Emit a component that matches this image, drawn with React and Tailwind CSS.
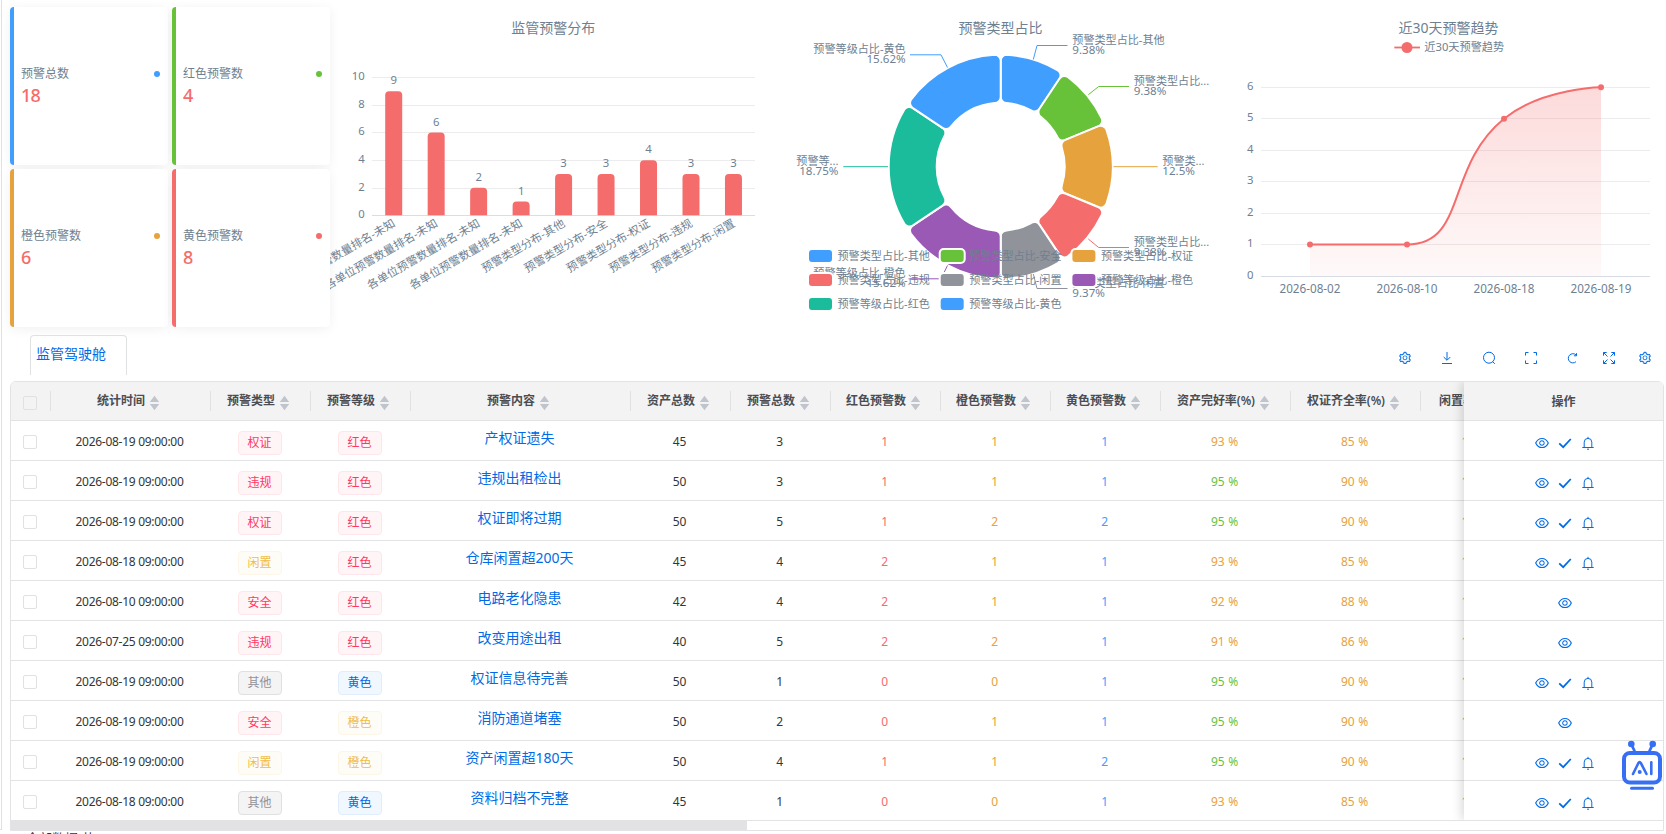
import React from 'react';
import { AiOutlineSetting, AiOutlineEye } from 'react-icons/ai';

const FONT = "font-['Noto_Sans','Noto_Sans_CJK_SC',sans-serif]";
const INK = '#6e7f92';

/* ---------- stat cards ---------- */
const CARDS = [
  { label: '预警总数', value: 18, border: 'border-[#409eff]', dot: 'bg-[#409eff]' },
  { label: '红色预警数', value: 4, border: 'border-[#67c23a]', dot: 'bg-[#67c23a]' },
  { label: '橙色预警数', value: 6, border: 'border-[#e6a23c]', dot: 'bg-[#e6a23c]' },
  { label: '黄色预警数', value: 8, border: 'border-[#f56c6c]', dot: 'bg-[#f56c6c]' },
];

function StatCard({ card }) {
  return (
    <div className={`flex h-[158px] w-[158px] flex-col justify-center rounded border-l-4 bg-white pr-2 pl-[7px] shadow-[0_2px_12px_rgba(0,0,0,0.06)] ${card.border}`}>
      <div className="flex items-center justify-between text-[12px] leading-[18px] text-[#6e7f92]">
        <span>{card.label}</span>
        <span className={`h-1.5 w-1.5 rounded-full ${card.dot}`} />
      </div>
      <div className="text-[18px] leading-[25px] font-medium tracking-[-0.7px] text-[#f56c6c]">{card.value}</div>
    </div>
  );
}

function T({ x, y, size = 11, anchor = 'start', children, ...rest }) {
  return (
    <text x={x} y={y} fontSize={size} textAnchor={anchor} fill={INK} dominantBaseline="central" {...rest}>
      {children}
    </text>
  );
}

/* ---------- bar chart ---------- */
const BARS = [
  ['各单位预警数量排名-未知', 9],
  ['各单位预警数量排名-未知', 6],
  ['各单位预警数量排名-未知', 2],
  ['各单位预警数量排名-未知', 1],
  ['预警类型分布-其他', 3],
  ['预警类型分布-安全', 3],
  ['预警类型分布-权证', 4],
  ['预警类型分布-违规', 3],
  ['预警类型分布-闲置', 3],
];

function BarChart() {
  return (
    <svg width="447" height="331" viewBox="330 0 447 331" className="shrink-0 overflow-hidden">
      <T x="553.3" y="27" size={14} anchor="middle">监管预警分布</T>
      {[0, 2, 4, 6, 8, 10].map((v) => {
        const y = Math.round(215.1 - v * 13.78) + 0.5;
        return (
          <g key={v}>
            <line x1="372" x2="755" y1={y} y2={y} stroke={v ? '#ececef' : '#dcdde2'} />
            <T x="364.8" y={y - 2} anchor="end" size={11.3}>{v}</T>
          </g>
        );
      })}
      {BARS.map(([name, v], i) => {
        const cx = 393.7 + i * 42.47;
        const top = 215.3 - v * 13.78;
        return (
          <g key={i}>
            <path
              d={`M${cx - 8.5} 215.3V${top + 4}a4 4 0 0 1 4 -4h9a4 4 0 0 1 4 4V215.3Z`}
              fill="#f56c6c"
            />
            <T x={cx} y={top - 11.5} anchor="middle" size={11.3}>{v}</T>
            <T x="0" y="0" size={11.3} anchor="end" transform={`translate(${cx} 221.8) rotate(-30)`}>{name}</T>
          </g>
        );
      })}
    </svg>
  );
}

/* ---------- pie chart ---------- */
const CX = 1000.7;
const CY = 166.7;
const SLICES = [
  [3, '#409eff'], [3, '#67c23a'], [4, '#e6a23c'], [3, '#f56c6c'],
  [3, '#909399'], [5, '#9b59b6'], [6, '#1abc9c'], [5, '#409eff'],
];
const at = (r, a) => `${(CX + r * Math.sin(a)).toFixed(2)} ${(CY - r * Math.cos(a)).toFixed(2)}`;

function slicePath(a0, a1) {
  const R = 112;
  const r = 64;
  const c = 6;
  return [
    `M${at(r + c, a0)}`,
    `L${at(R - c, a0)}`,
    `A${c} ${c} 0 0 1 ${at(R, a0 + c / R)}`,
    `A${R} ${R} 0 0 1 ${at(R, a1 - c / R)}`,
    `A${c} ${c} 0 0 1 ${at(R - c, a1)}`,
    `L${at(r + c, a1)}`,
    `A${c} ${c} 0 0 1 ${at(r, a1 - c / r)}`,
    `A${r} ${r} 0 0 0 ${at(r, a0 + c / r)}`,
    `A${c} ${c} 0 0 1 ${at(r + c, a0)}Z`,
  ].join('');
}

const CALLOUTS = [
  { pts: '1033.3,59.5 1037,45.5 1067.5,45.5', c: '#409eff', x: 1072.3, y: 39, a: 'start', t: '预警类型占比-其他', p: '9.38%' },
  { pts: '1088.3,94.7 1098.7,86.5 1129,86.5', c: '#67c23a', x: 1133.7, y: 80, a: 'start', t: '预警类型占比...', p: '9.38%' },
  { pts: '1113.5,166.7 1157.7,166.7', c: '#e6a23c', x: 1162.3, y: 160, a: 'start', t: '预警类...', p: '12.5%' },
  { pts: '1088.3,239 1098.7,247.5 1129,247.5', c: '#f56c6c', x: 1133.7, y: 241, a: 'start', t: '预警类型占比...', p: '9.38%' },
  { pts: '1033.3,274 1037,288.5 1067.5,288.5', c: '#909399', x: 1072.3, y: 282.3, a: 'start', t: '预警类型占比-闲置', p: '9.37%' },
  { pts: '947.5,265.5 941,278.8 910,278.8', c: '#9b59b6', x: 905.7, y: 272, a: 'end', t: '预警等级占比-橙色', p: '15.62%' },
  { pts: '888,166.7 843.3,166.7', c: '#1abc9c', x: 838.5, y: 160, a: 'end', t: '预警等...', p: '18.75%' },
  { pts: '947.5,67.5 941,54.8 910,54.8', c: '#409eff', x: 905.7, y: 48, a: 'end', t: '预警等级占比-黄色', p: '15.62%' },
];

const PIE_LEGEND = [
  ['预警类型占比-其他', '#409eff'], ['预警类型占比-安全', '#67c23a'], ['预警类型占比-权证', '#e6a23c'],
  ['预警类型占比-违规', '#f56c6c'], ['预警类型占比-闲置', '#909399'], ['预警等级占比-橙色', '#9b59b6'],
  ['预警等级占比-红色', '#1abc9c'], ['预警等级占比-黄色', '#409eff'],
];

function PieChart() {
  let acc = 0;
  return (
    <svg width="447" height="331" viewBox="777 0 447 331" className="shrink-0 overflow-hidden">
      <T x={CX - 0.3} y="27" size={14} anchor="middle">预警类型占比</T>
      {SLICES.map(([n, color], i) => {
        const a0 = (acc / 32) * Math.PI * 2;
        acc += n;
        const a1 = (acc / 32) * Math.PI * 2;
        return <path key={i} d={slicePath(a0, a1)} fill={color} stroke="#fff" strokeWidth="2" />;
      })}
      {CALLOUTS.map((c, i) => (
        <g key={i}>
          <polyline points={c.pts} fill="none" stroke={c.c} strokeWidth="1" />
          <T x={c.x} y={c.y} anchor={c.a} size={11.1}>{c.t}</T>
          <T x={c.x} y={c.y + 10.6} anchor={c.a} size={11.6}>{c.p}</T>
        </g>
      ))}
      {PIE_LEGEND.map(([name, color], i) => {
        const x = 808 + (i % 3) * 131.7;
        const y = 249 + Math.floor(i / 3) * 24;
        return (
          <g key={i}>
            <rect x={x} y={y} width="25" height="14" rx="4" fill={color} stroke="#fff" strokeWidth="2" />
            <T x={x + 29.5} y={y + 6} size={11.1}>{name}</T>
          </g>
        );
      })}
    </svg>
  );
}

/* ---------- trend chart ---------- */
function TrendChart() {
  const curve = 'M1310 244.5L1407 244.5C1467 244.5 1444.9 166.6 1504 118.7C1541.9 88 1601 87.3 1601 87.3';
  return (
    <svg width="442" height="331" viewBox="1224 0 442 331" className="shrink-0 overflow-hidden">
      <defs>
        <linearGradient id="area" x1="0" y1="0" x2="0" y2="1">
          <stop offset="0" stopColor="#f56c6c" stopOpacity="0.25" />
          <stop offset="1" stopColor="#f56c6c" stopOpacity="0.04" />
        </linearGradient>
      </defs>
      <T x="1448.4" y="27" size={14} anchor="middle">近30天预警趋势</T>
      <line x1="1394.3" x2="1420" y1="47.5" y2="47.5" stroke="#f56c6c" strokeWidth="1.8" />
      <circle cx="1407" cy="47.5" r="5.5" fill="#f56c6c" />
      <T x="1424.3" y="46" size={11.2}>近30天预警趋势</T>
      {[0, 1, 2, 3, 4, 5, 6].map((v) => {
        const y = Math.round(275.6 - v * 31.45) + 0.5;
        return (
          <g key={v}>
            <line x1="1261" x2="1650" y1={y} y2={y} stroke={v ? '#ececef' : '#d8dbe3'} />
            <T x="1253.5" y={y - 1.8} anchor="end" size={11.3}>{v}</T>
          </g>
        );
      })}
      <path d={`${curve}V276H1310Z`} fill="url(#area)" />
      <path d={curve} fill="none" stroke="#f56c6c" strokeWidth="2" />
      {[[1310, 244.5], [1407, 244.5], [1504, 118.7], [1601, 87.3]].map(([x, y]) => (
        <circle key={x} cx={x} cy={y} r="3" fill="#f56c6c" />
      ))}
      {['2026-08-02', '2026-08-10', '2026-08-18', '2026-08-19'].map((d, i) => (
        <T key={d} x={1310 + i * 97} y="287.8" size={11.7} anchor="middle">{d}</T>
      ))}
    </svg>
  );
}

/* ---------- toolbar ---------- */
function Line({ children, size = 14, w = 1, className = '' }) {
  return (
    <svg width={size} height={size} viewBox="0 0 14 14" fill="none" stroke="currentColor" strokeWidth={w} className={className}>
      {children}
    </svg>
  );
}

function Toolbar() {
  return (
    <div className="flex items-center text-[#006be6]">
      <AiOutlineSetting size={14} className="mr-7" />
      <Line className="mr-7"><path d="M7 1v8M3.7 6L7 9.3 10.3 6M2 12.5h10" /></Line>
      <Line className="mr-7"><circle cx="7" cy="6.7" r="5.5" /><path d="M10.6 10.6L12.8 12.8" /></Line>
      <Line className="mr-[27px]"><path d="M1.5 4.5v-3h3M9.5 1.5h3v3M12.5 9.5v3h-3M4.5 12.5h-3v-3" /></Line>
      <Line className="mr-[23px]"><path d="M11 3.9A4.6 4.6 0 1 0 11 10.7M11.5 2.2v2.6H8.9" /></Line>
      <Line className="mr-[22px]">
        <path d="M1.5 4.7V1.5h3.2M1.5 1.5l4 4M9.3 1.5h3.2v3.2M12.5 1.5l-4 4M12.5 9.3v3.2H9.3M12.5 12.5l-4-4M4.7 12.5H1.5V9.3M1.5 12.5l4-4" />
      </Line>
      <AiOutlineSetting size={14} />
    </div>
  );
}

function Bell() {
  return (
    <Line>
      <path d="M3.2 11.3V6.2a3.8 3.8 0 0 1 7.6 0v5.1M1.3 11.5h11.4M7 .9v1.5M6 13.2h2" />
    </Line>
  );
}

/* ---------- table ---------- */
const TAGS = {
  red: 'border-[#ffe6eb] bg-[#fff4f6] text-[#ff3860]',
  yellow: 'border-[#fdf6e6] bg-[#fefcf6] text-[#efbd48]',
  gray: 'border-[#e0e0e2] bg-[#f4f4f5] text-[#909399]',
  blue: 'border-[#e0edfc] bg-[#f0f7ff] text-[#006be6]',
};
const TYPE_TAG = { 权证: 'red', 违规: 'red', 安全: 'red', 闲置: 'yellow', 其他: 'gray' };
const LEVEL_TAG = { 红色: 'red', 橙色: 'yellow', 黄色: 'blue' };

const COLUMNS = [
  ['统计时间', 'w-[160px]'], ['预警类型', 'w-[100px]'], ['预警等级', 'w-[100px]'], ['预警内容', 'w-[220px]'],
  ['资产总数', 'w-[100px]'], ['预警总数', 'w-[100px]'], ['红色预警数', 'w-[110px]'], ['橙色预警数', 'w-[110px]'],
  ['黄色预警数', 'w-[110px]'], ['资产完好率(%)', 'w-[130px]'], ['权证齐全率(%)', 'w-[130px]'], ['闲置率(%)', 'w-[110px]'],
];

const ROWS = [
  ['2026-08-19', '权证', '红色', '产权证遗失', 45, 3, 1, 1, 1, 93, 85, 12, true],
  ['2026-08-19', '违规', '红色', '违规出租检出', 50, 3, 1, 1, 1, 95, 90, 10, true],
  ['2026-08-19', '权证', '红色', '权证即将过期', 50, 5, 1, 2, 2, 95, 90, 10, true],
  ['2026-08-18', '闲置', '红色', '仓库闲置超200天', 45, 4, 2, 1, 1, 93, 85, 12, true],
  ['2026-08-10', '安全', '红色', '电路老化隐患', 42, 4, 2, 1, 1, 92, 88, 11, false],
  ['2026-07-25', '违规', '红色', '改变用途出租', 40, 5, 2, 2, 1, 91, 86, 13, false],
  ['2026-08-19', '其他', '黄色', '权证信息待完善', 50, 1, 0, 0, 1, 95, 90, 10, true],
  ['2026-08-19', '安全', '橙色', '消防通道堵塞', 50, 2, 0, 1, 1, 95, 90, 10, false],
  ['2026-08-19', '闲置', '橙色', '资产闲置超180天', 50, 4, 1, 1, 2, 95, 90, 10, true],
  ['2026-08-18', '其他', '黄色', '资料归档不完整', 45, 1, 0, 0, 1, 93, 85, 12, true],
];

function Cell({ w, children, pad = 'pt-[2px] pr-[3px]', className = '' }) {
  return <div className={`flex h-full shrink-0 items-center justify-center ${pad} ${w} ${className}`}>{children}</div>;
}

function Checkbox({ bg = 'bg-white' }) {
  return <span className={`mt-[3px] h-[14px] w-[14px] rounded-[2px] border border-[#e0e1e5] ${bg}`} />;
}

function Tag({ tone, children }) {
  return (
    <span className={`mt-[3px] flex h-6 w-11 items-center justify-center rounded border text-[12px] tracking-normal ${TAGS[tone]}`}>{children}</span>
  );
}

function HeaderCell({ label, w }) {
  return (
    <div className={`flex h-full shrink-0 items-center ${w}`}>
      <div className="flex flex-1 items-center justify-center">
        <span className="text-[12px] font-semibold tracking-[-0.05px] whitespace-nowrap">{label}</span>
        <svg width="19" height="16" viewBox="0 0 19 16" className="mt-[3px] shrink-0" fill="#c0c4cc">
          <path d="M9.5 .8L14.2 7H4.8ZM9.5 15.2L14.2 9H4.8Z" />
        </svg>
      </div>
      <div className="h-5 w-px bg-[#e0e1e3]" />
    </div>
  );
}

function TableRow({ row }) {
  const [date, type, level, content, assets, total, red, orange, yellow, good, cert, idle] = row;
  return (
    <div className="flex h-10 border-b border-[#e2e3e5] text-[12px] tracking-[-0.2px] text-[#323639]">
      <Cell w="w-10" pad="pr-[3px]"><Checkbox /></Cell>
      <Cell w="w-[160px]" className="tracking-[-0.28px]">{date} 09:00:00</Cell>
      <Cell w="w-[100px]"><Tag tone={TYPE_TAG[type]}>{type}</Tag></Cell>
      <Cell w="w-[100px]"><Tag tone={LEVEL_TAG[level]}>{level}</Tag></Cell>
      <Cell w="w-[220px]" pad="pr-[3px] pb-[7px]" className="text-[14px] tracking-normal text-[#006be6]">{content}</Cell>
      <Cell w="w-[100px]">{assets}</Cell>
      <Cell w="w-[100px]">{total}</Cell>
      <Cell w="w-[110px]" className="text-[#f56c6c]">{red}</Cell>
      <Cell w="w-[110px]" className="text-[#e6a23c]">{orange}</Cell>
      <Cell w="w-[110px]" className="text-[#409eff]">{yellow}</Cell>
      <Cell w="w-[130px]" className={`[word-spacing:1px] ${good >= 95 ? 'text-[#67c23a]' : 'text-[#e6a23c]'}`}>{`${good} %`}</Cell>
      <Cell w="w-[130px]" className="[word-spacing:1px] text-[#e6a23c]">{`${cert} %`}</Cell>
      <Cell w="w-[110px]" className={idle <= 10 ? 'text-[#67c23a]' : 'text-[#e6a23c]'}>{`${idle} %`}</Cell>
    </div>
  );
}

function DataTable() {
  return (
    <div className="ml-[10px] flex h-[450px] w-[1654px] shrink-0 flex-col overflow-hidden rounded-t-md border border-[#e2e3e5]">
      <div className="flex h-[439px] shrink-0 overflow-hidden border-b border-[#e2e3e5]">
        <div className="w-[1453px] overflow-hidden">
          <div className="flex h-[39px] w-[1520px] border-b border-[#e2e3e5] bg-[#f3f3f4] text-[#4b4d52]">
            <div className="flex h-full w-10 shrink-0 items-center">
              <div className="flex flex-1 items-center justify-center pr-[2px]"><Checkbox bg="bg-[#f3f3f4]" /></div>
              <div className="h-5 w-px bg-[#e0e1e3]" />
            </div>
            {COLUMNS.map(([label, w]) => <HeaderCell key={label} label={label} w={w} />)}
          </div>
          <div className="w-[1520px]">{ROWS.map((r, i) => <TableRow key={i} row={r} />)}</div>
        </div>
        <div className="relative w-[199px] shrink-0 bg-white shadow-[-2px_0_10px_rgba(0,0,0,0.16)]">
          <div className="flex h-[39px] items-center justify-center border-b border-[#e2e3e5] bg-[#f3f3f4] pt-px text-[12px] font-semibold text-[#4b4d52]">操作</div>
          {ROWS.map((r, i) => (
            <div key={i} className="flex h-10 items-center justify-center border-b border-[#e2e3e5] pt-[5px] pl-[2px] text-[#006be6]">
              <AiOutlineEye size={16} />
              {r[12] && <Line w={1.7} className="mr-[9px] ml-2"><path d="M1.2 7.3L5.2 11.2 12.8 3" /></Line>}
              {r[12] && <Bell />}
            </div>
          ))}
        </div>
      </div>
      <div className="h-[10px] w-[736px] bg-[#e2e2e4]" />
    </div>
  );
}

function Robot() {
  return (
    <svg width="42" height="51" viewBox="0 0 42 51" fill="none" className="absolute top-[740px] left-[1621px] z-20">
      <rect x="3" y="13" width="36" height="29.5" rx="6" fill="#fff" stroke="#366ef4" strokeWidth="4" />
      <g stroke="#366ef4" strokeLinecap="round" strokeLinejoin="round">
        <path d="M10.5 4.5L13.5 11M31.5 4.5L28.5 11" strokeWidth="2.8" />
        <path d="M10.5 48.3H31.5" strokeWidth="3" />
        <path d="M12 34L17.3 23.2Q18.6 21 19.9 23.2L25.5 34M30.3 22.3V34" strokeWidth="2.6" />
      </g>
      <circle cx="10.3" cy="4" r="3.3" fill="#366ef4" />
      <circle cx="31.7" cy="4" r="3.3" fill="#366ef4" />
      <circle cx="18.7" cy="32" r="2" fill="#366ef4" />
    </svg>
  );
}

export default function App() {
  return (
    <div className={`relative flex h-[834px] w-[1666px] overflow-hidden bg-white ${FONT}`}>
      <div className="flex w-0 flex-col">
        <div className="ml-px h-[829px] w-px shrink-0 bg-[#e0e1e3]" />
        <div className="h-px w-[2px] bg-[#e0e1e3]" />
      </div>
      <div className="flex flex-col">
        <div className="flex h-[331px] shrink-0">
          <div className="w-[330px] shrink-0 pt-[7px] pl-[10px]">
            <div className="grid grid-cols-[158px_158px] gap-1">
              {CARDS.map((c) => <StatCard key={c.label} card={c} />)}
            </div>
          </div>
          <BarChart />
          <PieChart />
          <TrendChart />
        </div>
        <div className="flex h-[50px] shrink-0 items-start justify-between pr-[14px] pl-[30px]">
          <div className="mt-1 flex h-10 w-[97px] rounded-t border border-b-0 border-[#e0e1e3] pl-[5px] text-[14px] leading-[36px] text-[#006be6]">
            监管驾驶舱
          </div>
          <div className="mt-5"><Toolbar /></div>
        </div>
        <DataTable />
        <div className="shrink-0 pl-[26px] text-[13px] leading-[14px] whitespace-nowrap text-[#323639]">全部数据 共</div>
      </div>
      <Robot />
    </div>
  );
}
